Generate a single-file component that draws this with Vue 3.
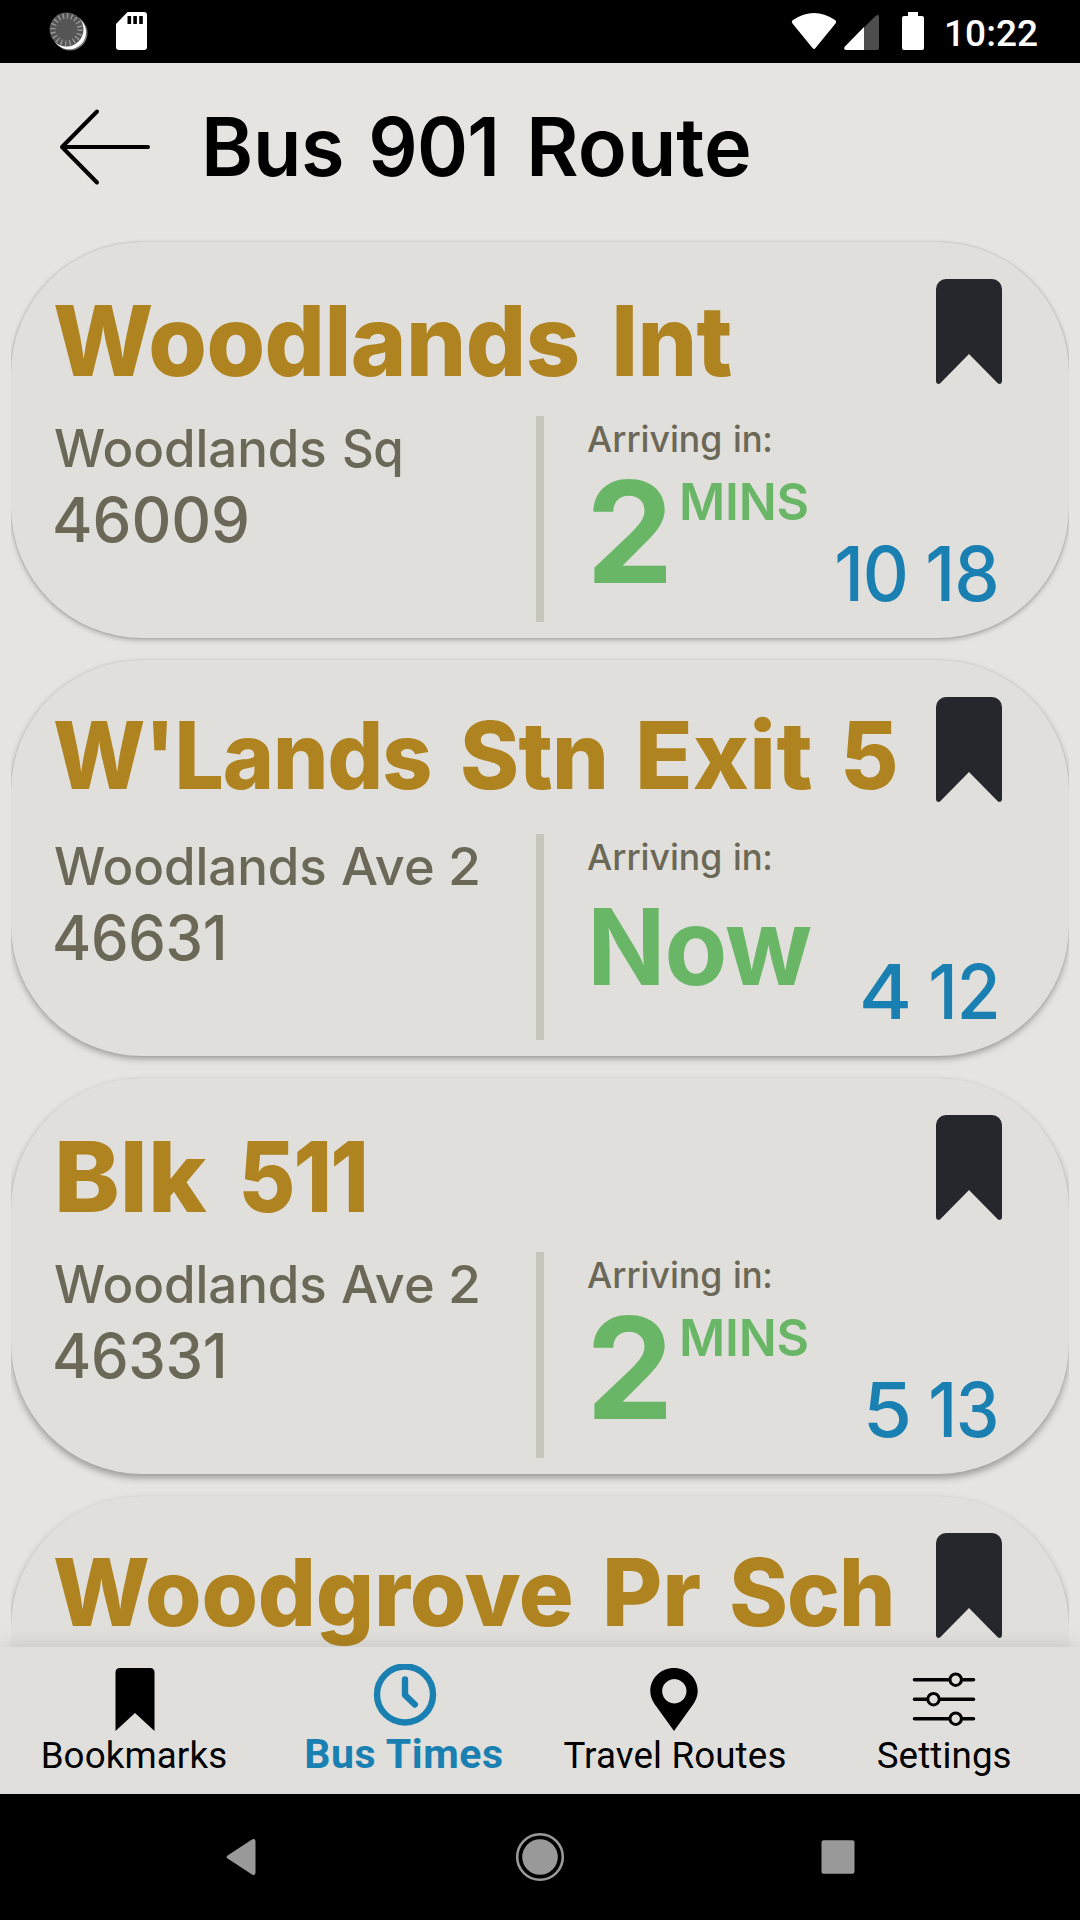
<script setup>
const woodlandsAve = [['Woodlands', 270], ['Ave', 90.5, 16.5], ['2', 27, 19]]
// Each word is [text, width, gap before it].
const stops = [
  { words: [['Woodlands', 523], ['Int', 115, 38]], size: 98, line: 110, x: 0, road: [['Woodlands', 270], ['Sq', 57, 18.5]], code: '46009', codeW: 192, mins: '2', next: [['10', 68], ['18', 68]], shade: '0 2px 5px rgba(0,0,0,.27), 0 0 2px rgba(0,0,0,.16)' },
  { words: [["W'Lands", 375], ['Stn', 141, 33], ['Exit', 171, 36], ['5', 50, 34]], size: 93, line: 103, x: 0, road: woodlandsAve, code: '46631', codeW: 168, mins: null, next: [['4', 45], ['12', 65]], shade: '0 3px 6px rgba(0,0,0,.3), 0 0 2px rgba(0,0,0,.1)' },
  { words: [['Blk', 148.5], ['511', 121, 35.5]], size: 98, line: 110, x: 4, road: woodlandsAve, code: '46331', codeW: 168, mins: '2', next: [['5', 40], ['13', 65]], shade: '0 4px 7px rgba(0,0,0,.32), 0 0 1px rgba(0,0,0,.08)' },
  { words: [['Woodgrove', 516], ['Pr', 93, 36], ['Sch', 158.5, 31.5]], size: 93, line: 104, x: 0, shade: '0 4px 7px rgba(0,0,0,.32), 0 0 1px rgba(0,0,0,.06)' },
]
const title = [['Bus', 136], ['901', 123, 30], ['Route', 218, 36]]
const arriving = [['Arriving', 133], ['in:', 36, 14.5]]

// Sets glyph width and tracking so that the visible ink of the text spans
// exactly the given width. Most of the difference goes into glyph width;
// the argument (percent) overrides that share.
const vFit = {
  mounted(el, { value, arg }) {
    const text = el.textContent
    const ctx = document.createElement('canvas').getContext('2d')
    ctx.font = getComputedStyle(el).font
    const m = ctx.measureText(text)
    const ink = m.actualBoundingBoxLeft + m.actualBoundingBoxRight
    const share = text.length > 1 ? Number(arg ?? 80) / 100 : 1
    const scale = 1 + (value / ink - 1) * share
    const width = value / scale
    el.style.width = width + 'px'
    el.style.textIndent = m.actualBoundingBoxLeft + 'px'
    if (text.length > 1) el.style.letterSpacing = (width - ink) / (text.length - 1) + 'px'
    el.style.transform = `scaleX(${scale})`
    el.style.transformOrigin = '0 0'
    el.style.marginRight = value - width + 'px'
  },
}
</script>

<template>
  <div class="screen">
    <div class="status">
      <svg class="s-left" width="150" height="63" viewBox="0 0 150 63">
        <circle cx="70" cy="33" r="17.5" fill="#777" />
        <circle cx="69" cy="32.3" r="17" fill="#fff" />
        <circle cx="66.5" cy="29.5" r="17" fill="#555" />
        <circle cx="66.5" cy="29.5" r="13.5" fill="none" stroke="#999" stroke-width="5.5" stroke-dasharray="1.3 2.941" />
        <path d="M127.500 12H144a3 3 0 0 1 3 3V47a3 3 0 0 1-3 3H119a3 3 0 0 1-3-3V24Z" fill="#fff" />
        <path d="M127.500 16h3.600v8h-3.600zM133.300 16h3.600v8h-3.600zM139.200 16h3.600v8h-3.600z" fill="#000" />
      </svg>
      <svg class="s-right" width="140" height="63" viewBox="790 0 140 63" fill="#fff">
        <path d="M792.500 23.500Q791 21.500 793 20Q814 6 835 20Q837 21.500 835.500 23.500L815.500 48Q814 50 812.500 48Z" />
        <path d="M845 46.500L875.500 16Q879 13.500 879 17V48q0 2-2 2H846q-3-.5-1-3.500Z" fill="#4d4d4d" />
        <path d="M845 46.500L864 27V50H846q-3-.5-1-3.500Z" />
        <path d="M908 12h10v4h4a2 2 0 0 1 2 2v30a2 2 0 0 1-2 2h-18a2 2 0 0 1-2-2V18a2 2 0 0 1 2-2h4Z" />
      </svg>
      <span v-fit:0="90" class="clock">10:22</span>
    </div>

    <header class="header">
      <svg width="92" height="78" viewBox="0 0 92 78" fill="none" stroke="#000" stroke-width="4" stroke-linecap="round" stroke-linejoin="round">
        <path d="M89 39H3M38 3.500L3 39l35 35.500" />
      </svg>
      <h1 class="words">
        <span v-for="w in title" :key="w[0]" :style="{ paddingLeft: (w[2] || 0) + 'px' }"><span v-fit="w[1]" class="word">{{ w[0] }}</span></span>
      </h1>
    </header>

    <main class="list">
      <article v-for="s in stops" :key="s.words[0][0]" class="card" :style="{ boxShadow: s.shade }">
        <div class="top">
          <h2 class="words" :style="{ fontSize: s.size + 'px', lineHeight: s.line + 'px', marginLeft: s.x + 'px' }">
            <span v-for="w in s.words" :key="w[0]" :style="{ paddingLeft: (w[2] || 0) + 'px' }"><span v-fit="w[1]" class="word">{{ w[0] }}</span></span>
          </h2>
          <svg class="mark" width="66" height="105" viewBox="0 0 66 105">
            <path d="M10 0H56A10 10 0 0 1 66 10V102.500Q65.500 106 62 104.500L33 75L4 104.500Q.5 106 0 102.500V10A10 10 0 0 1 10 0Z" fill="#26272c" />
          </svg>
        </div>
        <div v-if="s.road" class="bottom">
          <div class="place">
            <div class="road words">
              <span v-for="w in s.road" :key="w[0]" :style="{ paddingLeft: (w[2] || 0) + 'px' }"><span v-fit="w[1]" class="word">{{ w[0] }}</span></span>
            </div>
            <div v-fit="s.codeW" class="code">{{ s.code }}</div>
          </div>
          <div class="arrival">
            <div class="soon">
              <div class="label words">
                <span v-for="w in arriving" :key="w[0]" :style="{ paddingLeft: (w[2] || 0) + 'px' }"><span v-fit="w[1]" class="word">{{ w[0] }}</span></span>
              </div>
              <div v-if="s.mins" class="eta">
                <span v-fit="74" class="num">{{ s.mins }}</span>
                <span v-fit="125" class="unit">MINS</span>
              </div>
              <div v-else class="eta"><span v-fit="218" class="now">Now</span></div>
            </div>
            <div class="next">
              <span v-for="n in s.next" :key="n[0]" v-fit="n[1]">{{ n[0] }}</span>
            </div>
          </div>
        </div>
      </article>
    </main>

    <nav class="tabs">
      <div class="tab">
        <svg width="66" height="70" viewBox="0 0 66 70">
          <path d="M18 4H48Q52.500 4 52.500 8.500V67L33 49L13.500 67V8.500Q13.500 4 18 4Z" />
        </svg>
        <span v-fit:0="182.5">Bookmarks</span>
      </div>
      <div class="tab active">
        <svg width="66" height="70" viewBox="0 0 66 70" fill="none" stroke="#1a80b1" stroke-width="6.400" stroke-linecap="round" stroke-linejoin="round">
          <circle cx="33" cy="30.500" r="28" />
          <path d="M33 15.500V31L42.800 40.500" />
        </svg>
        <span v-fit:0="197">Bus Times</span>
      </div>
      <div class="tab">
        <svg width="66" height="70" viewBox="0 0 66 70">
          <path fill-rule="evenodd" d="M33 4C46 4 56.700 14 56.700 27C56.700 33 54 38 51 42L33 67L15 42C12 38 9.300 33 9.300 27C9.300 14 20 4 33 4ZM33.300 15a12.200 12.200 0 1 0 .01 0Z" />
        </svg>
        <span v-fit:0="222">Travel Routes</span>
      </div>
      <div class="tab">
        <svg width="66" height="70" viewBox="0 0 66 70" fill="#e0dfdb" stroke="#000" stroke-width="3.600" stroke-linecap="round">
          <path d="M3.500 15.700H62.500M3.500 35.200H62.500M3.500 54.700H62.500" />
          <g stroke-width="3"><circle cx="44.700" cy="15.700" r="5.700" /><circle cx="22.500" cy="35.200" r="5.700" /><circle cx="44.700" cy="54.700" r="5.700" /></g>
        </svg>
        <span v-fit:0="133">Settings</span>
      </div>
    </nav>

    <div class="sysnav">
      <svg width="30" height="40" viewBox="0 0 30 40"><path d="M2 18.200L26 2.600Q29.500 1 29.500 4.500V35.500Q29.500 39 26 37.400L2 21.800Q-1 20 2 18.200Z" fill="#999" /></svg>
      <svg class="home" width="50" height="50" viewBox="0 0 50 50"><circle cx="25" cy="25" r="22.800" fill="none" stroke="#999" stroke-width="2.600" /><circle cx="25" cy="25" r="17.800" fill="#999" /></svg>
      <svg width="34" height="34" viewBox="0 0 34 34"><rect x=".5" y=".2" width="33" height="33.600" rx="2" fill="#999" /></svg>
    </div>
  </div>
</template>

<style>
body { margin: 0; background: #000; }
</style>

<style scoped>
.screen {
  width: 1080px; height: 1920px; overflow: hidden; display: flex; flex-direction: column;
  background: #e5e4e0; font-family: Inter, "Liberation Sans", sans-serif; white-space: nowrap;
}
svg { display: block; flex: none; }
.words { display: flex; }
.word { display: block; }
.status { flex: none; height: 63px; background: #000; display: flex; align-items: center; }
.s-right { margin-left: 640px; }
.clock { display: block; margin-left: 17px; font: 500 37px/63px Roboto, sans-serif; color: #fff; padding-top: 3px; }
.header { flex: none; height: 168px; box-sizing: border-box; display: flex; align-items: center; padding-left: 59px; }
.header h1 { margin: 0 0 0 55px; font-size: 81px; line-height: 100px; font-weight: 600; color: #000; }
.list { flex: 1; min-height: 0; overflow: hidden; margin: 0 11px; padding-top: 11px; display: flex; flex-direction: column; gap: 22px; }
.card { flex: none; height: 396px; border-radius: 131px; background: #e0dfdb; }
.top { height: 174px; display: flex; justify-content: space-between; align-items: flex-start; padding: 0 67px 0 44px; }
.top h2 { margin: 44px 0 0; font-weight: 800; color: #af8420; }
.mark { margin-top: 37px; }
.bottom { height: 206px; display: flex; }
.place { width: 481px; padding-left: 44px; color: #6b6857; font-weight: 500; }
.road { font-size: 51.5px; line-height: 64.5px; }
.code { font-size: 62px; line-height: 78px; }
.arrival { flex: 1; display: flex; justify-content: space-between; border-left: 8px solid #c8c6bc; padding: 0 73px 0 43px; }
.soon { flex: none; width: 226px; }
.label { font-size: 36px; line-height: 46px; font-weight: 500; color: #6b6857; }
.eta { display: flex; gap: 15px; padding-left: 6px; color: #69b666; }
.num { font-size: 141px; line-height: 139px; font-weight: 700; }
.unit { font-size: 51px; line-height: 79px; font-weight: 600; }
.now { font-size: 106px; line-height: 133px; font-weight: 700; }
.next { align-self: flex-end; display: flex; gap: 23px; font-size: 76px; line-height: 98px; font-weight: 500; color: #1a80b1; }
.next span, .eta span { flex: none; }
.tabs { flex: none; height: 147px; box-sizing: border-box; padding-right: 1px; display: flex; background: #e0dfdb; box-shadow: 0 0 20px rgba(0, 0, 0, .13); position: relative; }
.tab { flex: 1; display: flex; flex-direction: column; align-items: center; padding-top: 17px; font: 400 36.75px/44px Roboto, sans-serif; color: #000; }
.tab span { margin-top: -1px; line-height: 46px; }
.tab.active { color: #1a80b1; font-weight: 700; }
.tab.active span { font-size: 41px; line-height: 43px; }
.sysnav { flex: none; height: 126px; background: #000; display: flex; align-items: center; padding: 0 225px 0 226px; justify-content: space-between; }
.home { margin-left: 2px; }
</style>
